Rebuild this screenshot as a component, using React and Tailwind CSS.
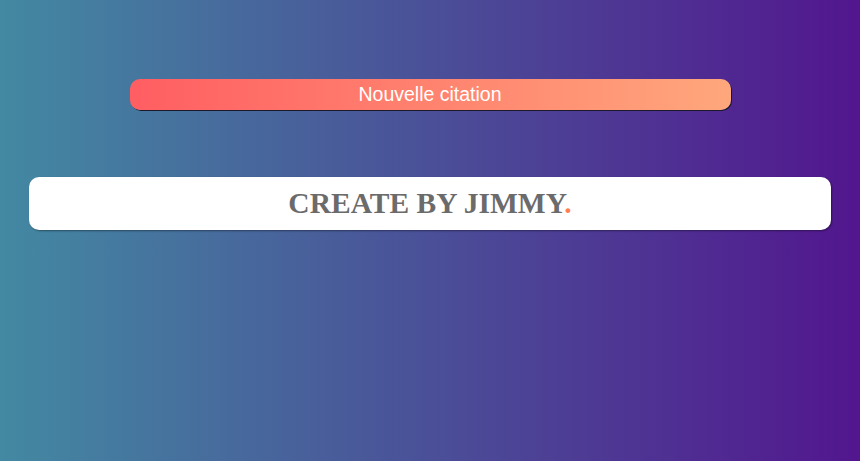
import React from "react";

const App = () => {
  return (
    <div className="min-h-[461px] w-full bg-[linear-gradient(to_right,#4389a2,#52168e)] flex flex-col items-center font-['Liberation_Sans',Arial,sans-serif]">
      <button className="mt-[79px] w-[601px] h-[31px] rounded-[10px] bg-[linear-gradient(to_right,#ff5e62,#ffa77c)] text-white text-[19.5px] leading-none shadow-[1px_1px_0_#1a1a2a]">
        Nouvelle citation
      </button>
      <div className="mt-[67px] w-[802px] h-[53px] rounded-[10px] bg-white flex items-center justify-center shadow-[1px_1px_2px_rgba(0,0,0,0.4)]">
        <h1 className="font-['Liberation_Serif','Times_New_Roman',serif] font-bold text-[29.5px] text-[#6b6b6b] leading-none pt-[1px]">
          CREATE BY JIMMY<span className="text-[#ff7f50]">.</span>
        </h1>
      </div>
    </div>
  );
};

export default App;
